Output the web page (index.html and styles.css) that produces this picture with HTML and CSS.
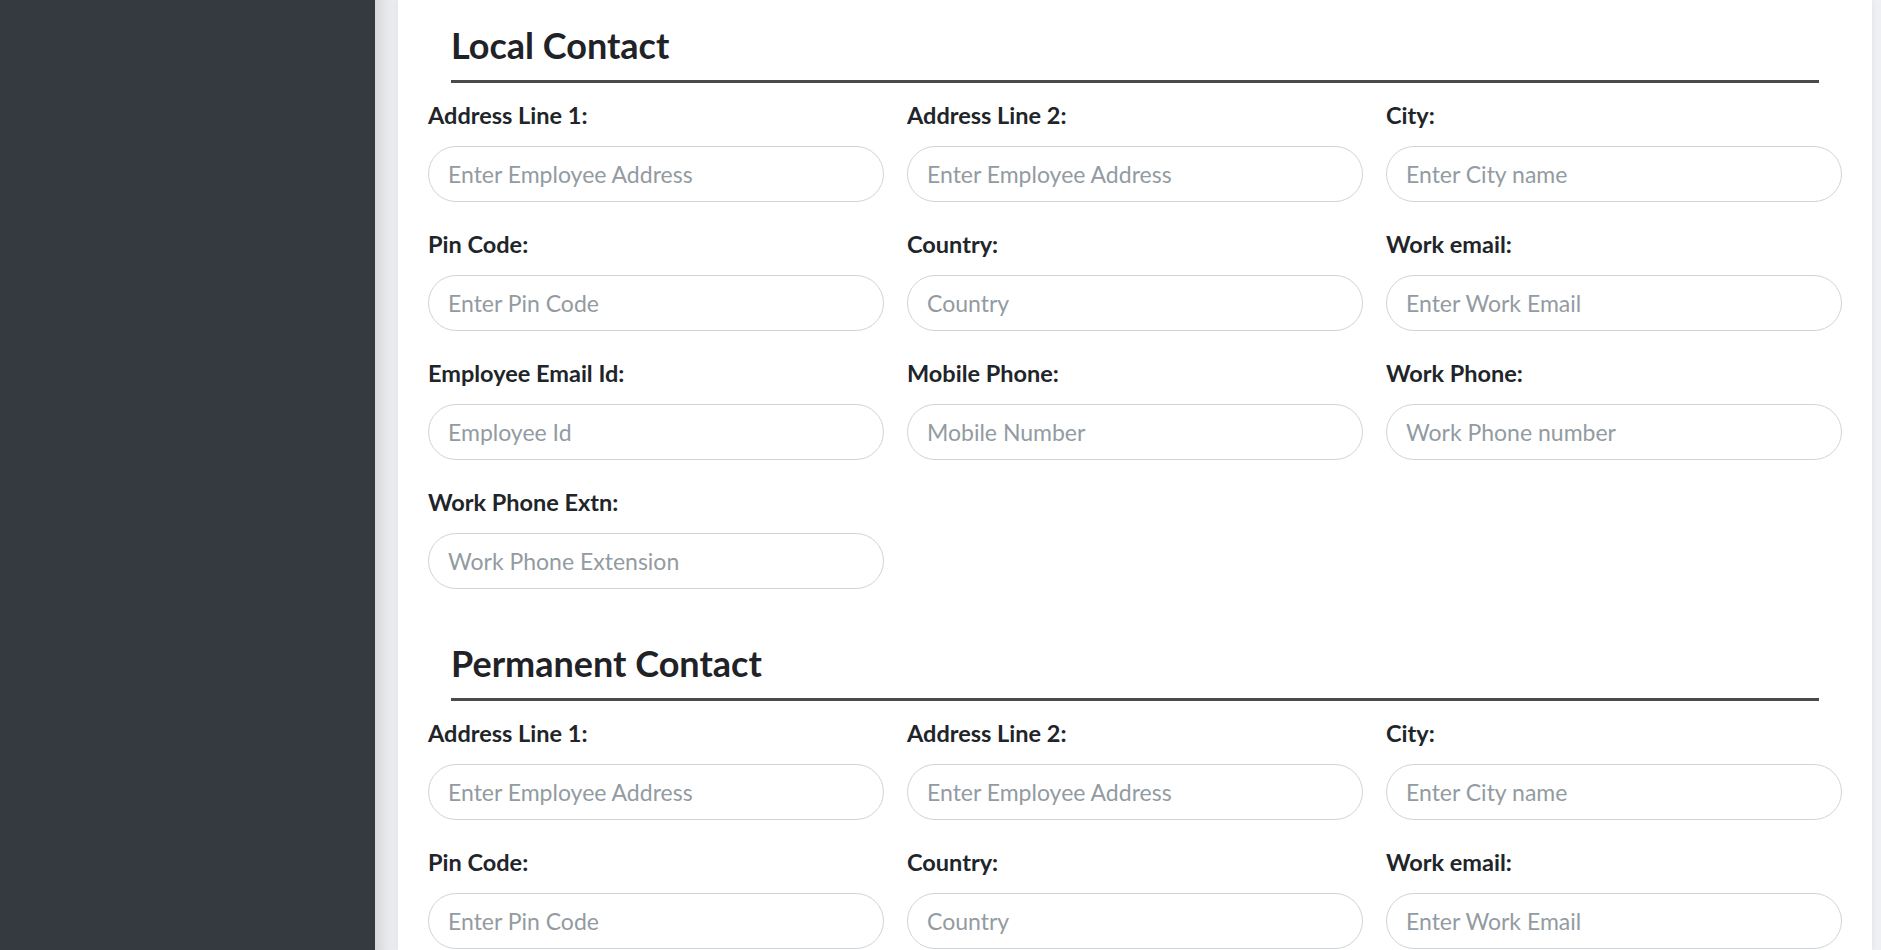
FILE: index.html
```html
<!DOCTYPE html>
<html lang="en">
<head>
<meta charset="utf-8">
<title>Employee Contact</title>
<link rel="stylesheet" href="styles.css">
</head>
<body>
<div class="layout">
  <aside class="sidebar"></aside>
  <main class="content">
    <div class="card">
      <section class="contact-section">
        <h3 class="section-title">Local Contact</h3>
        <div class="form-grid">
          <div class="form-group"><label class="field-label">Address Line 1:</label><input class="field-input" type="text" placeholder="Enter Employee Address"></div>
          <div class="form-group"><label class="field-label">Address Line 2:</label><input class="field-input" type="text" placeholder="Enter Employee Address"></div>
          <div class="form-group"><label class="field-label">City:</label><input class="field-input" type="text" placeholder="Enter City name"></div>
          <div class="form-group"><label class="field-label">Pin Code:</label><input class="field-input" type="text" placeholder="Enter Pin Code"></div>
          <div class="form-group"><label class="field-label">Country:</label><input class="field-input" type="text" placeholder="Country"></div>
          <div class="form-group"><label class="field-label">Work email:</label><input class="field-input" type="text" placeholder="Enter Work Email"></div>
          <div class="form-group"><label class="field-label">Employee Email Id:</label><input class="field-input" type="text" placeholder="Employee Id"></div>
          <div class="form-group"><label class="field-label">Mobile Phone:</label><input class="field-input" type="text" placeholder="Mobile Number"></div>
          <div class="form-group"><label class="field-label">Work Phone:</label><input class="field-input" type="text" placeholder="Work Phone number"></div>
          <div class="form-group"><label class="field-label">Work Phone Extn:</label><input class="field-input" type="text" placeholder="Work Phone Extension"></div>
        </div>
      </section>
      <section class="contact-section">
        <h3 class="section-title">Permanent Contact</h3>
        <div class="form-grid">
          <div class="form-group"><label class="field-label">Address Line 1:</label><input class="field-input" type="text" placeholder="Enter Employee Address"></div>
          <div class="form-group"><label class="field-label">Address Line 2:</label><input class="field-input" type="text" placeholder="Enter Employee Address"></div>
          <div class="form-group"><label class="field-label">City:</label><input class="field-input" type="text" placeholder="Enter City name"></div>
          <div class="form-group"><label class="field-label">Pin Code:</label><input class="field-input" type="text" placeholder="Enter Pin Code"></div>
          <div class="form-group"><label class="field-label">Country:</label><input class="field-input" type="text" placeholder="Country"></div>
          <div class="form-group"><label class="field-label">Work email:</label><input class="field-input" type="text" placeholder="Enter Work Email"></div>
          <div class="form-group"><label class="field-label">Employee Email Id:</label><input class="field-input" type="text" placeholder="Employee Id"></div>
          <div class="form-group"><label class="field-label">Mobile Phone:</label><input class="field-input" type="text" placeholder="Mobile Number"></div>
          <div class="form-group"><label class="field-label">Work Phone:</label><input class="field-input" type="text" placeholder="Work Phone number"></div>
          <div class="form-group"><label class="field-label">Work Phone Extn:</label><input class="field-input" type="text" placeholder="Work Phone Extension"></div>
        </div>
      </section>
    </div>
  </main>
</div>
</body>
</html>
```

FILE: styles.css
```css
html, body {
  margin: 0;
  padding: 0;
  height: 950px;
  overflow: hidden;
  font-family: Lato, "Noto Sans", "Liberation Sans", sans-serif;
  color: #212529;
}

.layout {
  display: flex;
  height: 950px;
}

.sidebar {
  width: 375px;
  flex: 0 0 375px;
  background: #343a40;
}

.content {
  flex: 1;
  display: flex;
  padding: 0 9px 0 23px;
  background: linear-gradient(90deg, #d5d7da 0, #e6e8eb 12px, #eceef1 23px, #eef0f4 24px);
}

.card {
  flex: 1;
  background: #ffffff;
  padding: 24px 30px 0;
  box-shadow: 0 0 6px rgba(0, 0, 0, 0.07);
}

.contact-section + .contact-section {
  margin-top: 27px;
}

.section-title {
  margin: 0 23px 16px;
  padding: 0 0 14px;
  font-size: 36px;
  line-height: 42px;
  font-weight: 700;
  color: #1f2327;
  border-bottom: 3px solid #4a4a4a;
}

.form-grid {
  display: grid;
  grid-template-columns: repeat(3, 1fr);
  column-gap: 23px;
}

.form-group {
  display: flex;
  flex-direction: column;
  margin-bottom: 26px;
}

.field-label {
  font-size: 23.5px;
  line-height: 33px;
  font-weight: 700;
  color: #212529;
  margin-bottom: 14px;
}

.field-input {
  box-sizing: border-box;
  height: 56px;
  width: 100%;
  border: 1px solid #ced4da;
  border-radius: 28px;
  padding: 0 19px;
  font-family: Lato, "Noto Sans", "Liberation Sans", sans-serif;
  font-size: 23px;
  color: #495057;
  background: #ffffff;
  outline: none;
}

.field-input::placeholder {
  color: #939ba2;
  opacity: 1;
}
```
